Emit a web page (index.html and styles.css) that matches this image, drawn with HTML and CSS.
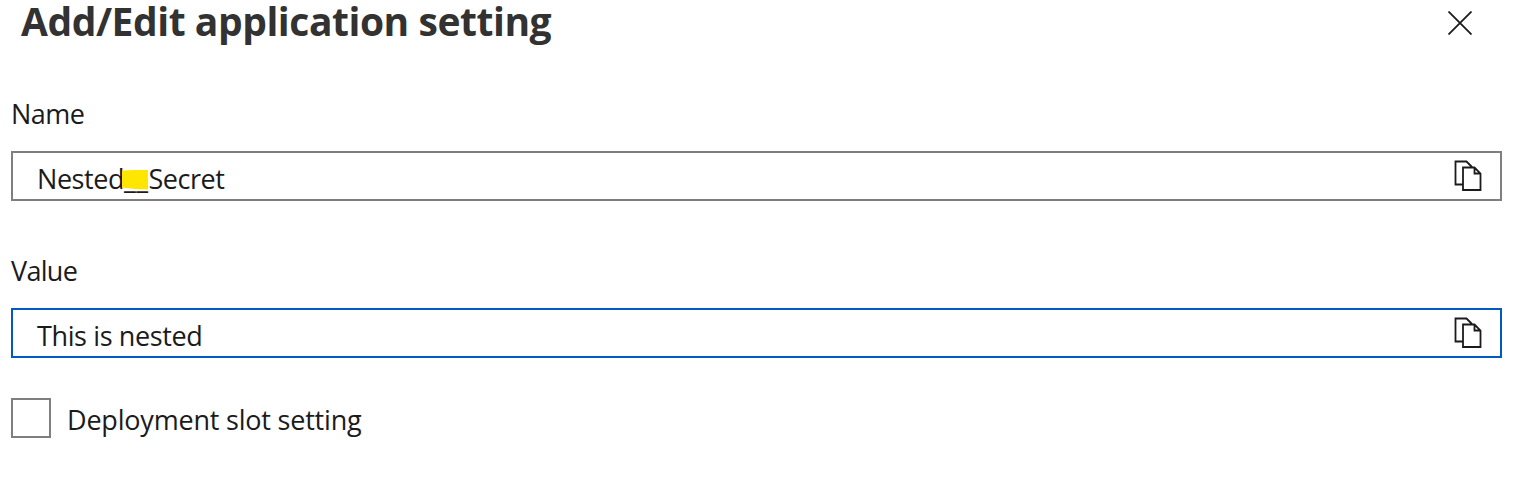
FILE: index.html
```html
<!DOCTYPE html>
<html lang="en">
<head>
<meta charset="utf-8">
<title>Add/Edit application setting</title>
<link rel="stylesheet" href="styles.css">
</head>
<body>
<main class="panel">
  <header class="header">
    <h1 class="title">Add/Edit application setting</h1>
    <svg class="close" viewBox="0 0 24 24"><path d="M.5.5l23 23M23.5.5l-23 23"/></svg>
  </header>
  <div class="label">Name</div>
  <div class="field">
    <span class="text name">Nested<span class="mark">__</span>Secret</span>
    <svg class="copy" viewBox="0 0 28 32"><path d="M8.500 26.500H1.500V3.500H12.500L18 9M9 9.500H20.500L26.500 15.500V32H9ZM20.500 9.500V15.500H26.500"/></svg>
  </div>
  <div class="label second">Value</div>
  <div class="field active">
    <span class="text value">This is nested</span>
    <svg class="copy" viewBox="0 0 28 32"><path d="M8.500 26.500H1.500V3.500H12.500L18 9M9 9.500H20.500L26.500 15.500V32H9ZM20.500 9.500V15.500H26.500"/></svg>
  </div>
  <div class="check">
    <span class="box"></span>
    <span class="text slot">Deployment slot setting</span>
  </div>
</main>
</body>
</html>
```
FILE: styles.css
```css
* { box-sizing: border-box; }
body { margin: 0; background: #fff; color: #1b1b1b; font: 27px/36px "Open Sans", "Noto Sans", sans-serif; }
.panel { height: 486px; padding: 0 24px 0 11px; }
.header { display: flex; justify-content: space-between; height: 97px; padding: 0 30px 0 10px; }
.title { margin: 0; font-size: 39px; line-height: 42px; font-weight: 700; letter-spacing: -0.45px; color: #323232; white-space: nowrap; }
.close { width: 24px; height: 24px; margin-top: 11px; fill: none; stroke: #1b1b1b; stroke-width: 1.8; }
.label { height: 54px; line-height: 34px; letter-spacing: -0.5px; }
.field { display: flex; align-items: center; justify-content: space-between; width: 1491px; height: 50px; padding: 5px 18px 0 24px; border: 2px solid #7f7f7f; }
.active { border-color: #005ac1; }
.second { margin-top: 53px; letter-spacing: -0.7px; }
.text { white-space: nowrap; }
.name { letter-spacing: -0.45px; }
.value { letter-spacing: -0.38px; }
.slot { margin-top: 3px; letter-spacing: -0.2px; }
.mark { position: relative; z-index: 0; letter-spacing: 0.4px; }
.mark::before { content: ""; position: absolute; z-index: -1; left: -2px; top: 10px; width: 26px; height: 20px; background: #ffe600; clip-path: polygon(0 5%, 100% 0, 100% 100%, 50% 98%, 0 90%); }
.copy { width: 28px; height: 32px; margin-top: -10px; fill: none; stroke: #1b1b1b; stroke-width: 1.8; overflow: visible; }
.check { display: flex; align-items: center; gap: 16px; margin-top: 40px; height: 40px; }
.box { width: 40px; height: 40px; border: 2px solid #7f7f7f; }
```
